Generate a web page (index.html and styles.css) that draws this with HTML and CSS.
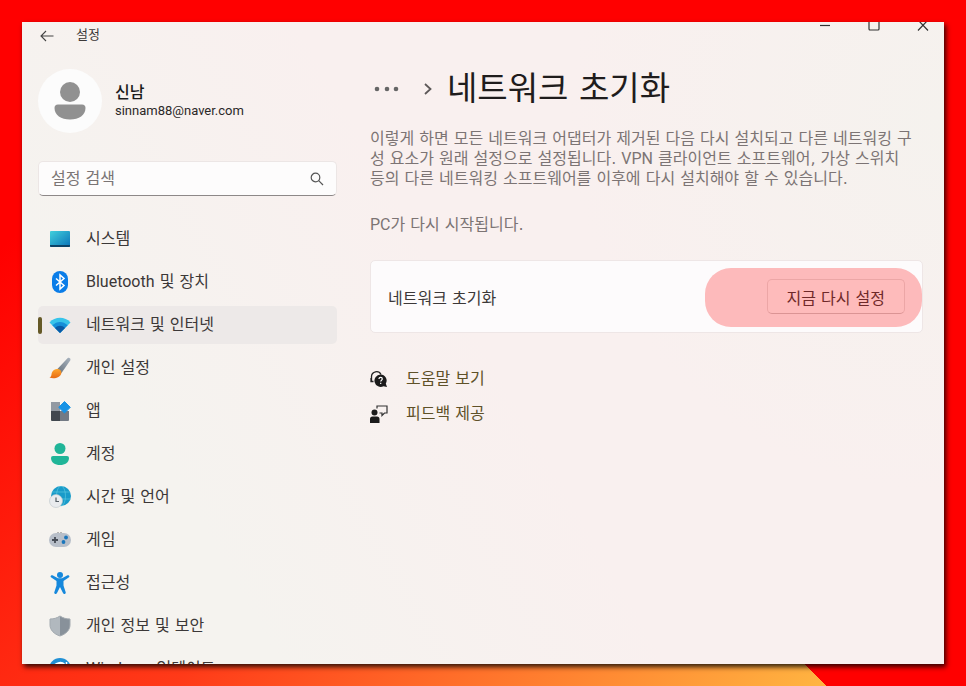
FILE: index.html
```html
<!DOCTYPE html>
<html lang="ko">

<head>
  <meta charset="UTF-8">
  <meta name="viewport" content="width=device-width, initial-scale=1.0">
  <title>설정</title>
  <link rel="stylesheet" href="styles.css">
</head>

<body>
  <div class="window">
    <header class="titlebar">
      <button class="back-btn" aria-label="뒤로">
        <svg width="14" height="12" viewBox="0 0 14 12" fill="none" stroke="#444" stroke-width="1.1">
          <path d="M13.5 6H1M6 1L1 6l5 5" />
        </svg>
      </button>
      <span class="app-name">설정</span>
      <div class="window-controls">
        <button aria-label="최소화">
          <svg width="12" height="12" viewBox="0 0 12 12"><path d="M1 3.5h10" stroke="#333" stroke-width="1.2" /></svg>
        </button>
        <button aria-label="최대화">
          <svg width="12" height="12" viewBox="0 0 12 12"><rect x="1" y="-2" width="10" height="10" rx="1" fill="none" stroke="#333" stroke-width="1.2" /></svg>
        </button>
        <button aria-label="닫기">
          <svg width="12" height="12" viewBox="0 0 12 12"><path d="M1-2l10 10.500M11-2L1 8.500" stroke="#333" stroke-width="1.2" /></svg>
        </button>
      </div>
    </header>

    <div class="content">
      <aside class="sidebar">
        <div class="profile">
          <div class="avatar">
            <svg width="32" height="38" viewBox="0 0 32 38" fill="#919191">
              <circle cx="16" cy="10" r="10" />
              <path d="M4 22.500h24a3.500 3.500 0 0 1 3.500 3.500c0 7-6.500 11.500-15.500 11.500S.5 33 .5 26A3.500 3.500 0 0 1 4 22.500z" />
            </svg>
          </div>
          <div>
            <div class="profile-name">신남</div>
            <div class="profile-mail">sinnam88@naver.com</div>
          </div>
        </div>

        <div class="search">
          <input type="text" placeholder="설정 검색" aria-label="설정 검색">
          <svg width="14" height="14" viewBox="0 0 14 14" fill="none" stroke="#555" stroke-width="1.2">
            <circle cx="5.500" cy="5.500" r="4.300" />
            <path d="M8.700 8.700L13 13" />
          </svg>
        </div>

        <nav class="nav">
          <a href="#">
            <svg viewBox="0 0 22 22">
              <defs>
                <linearGradient id="screen" x1="0" y1="0" x2="1" y2="1">
                  <stop offset="0" stop-color="#41d0dc" />
                  <stop offset="1" stop-color="#0a72b8" />
                </linearGradient>
              </defs>
              <rect x="1" y="3" width="20" height="16" rx="1" fill="url(#screen)" />
              <path d="M1 17h20v1a1 1 0 0 1-1 1H2a1 1 0 0 1-1-1z" fill="#0b4267" />
            </svg>
            시스템
          </a>
          <a href="#">
            <svg viewBox="0 0 22 22">
              <rect x="3" y="0" width="16" height="22" rx="8" fill="#0a7de8" />
              <path d="M7 7.500l8 7-4 3.500V4l4 3.500-8 7" fill="none" stroke="#fff" stroke-width="1.500" />
            </svg>
            <span><span lang="en">Bluetooth</span> 및 장치</span>
          </a>
          <a href="#" class="active">
            <svg viewBox="0 0 22 22">
              <path d="M.5 8.500C6 2.300 16 2.300 21.500 8.500L11 19z" fill="#38c4ea" />
              <path d="M3.300 11.300C8 6.800 14 6.800 18.700 11.300L11 19z" fill="#168fd8" />
              <path d="M6 14c3-3 7-3 10 0l-5 5z" fill="#0a5aa5" />
            </svg>
            네트워크 및 인터넷
          </a>
          <a href="#">
            <svg viewBox="0 0 22 22">
              <defs>
                <linearGradient id="handle" x1="0" y1="1" x2="1" y2="0">
                  <stop offset="0" stop-color="#66717c" />
                  <stop offset="1" stop-color="#a9b4bf" />
                </linearGradient>
                <linearGradient id="bristle" x1="0" y1="0" x2="0" y2="1">
                  <stop offset="0" stop-color="#ffa62d" />
                  <stop offset="1" stop-color="#e76a13" />
                </linearGradient>
              </defs>
              <path d="M8 12.500L18.500 1.300c1.500-1.300 3.700.3 2.700 2.100L12.500 16z" fill="url(#handle)" />
              <path d="M8 12c2.500-.5 5 2 4.300 4.500C11.300 20.500 5 22.500.5 20.500c2.800-1 1.300-3.500 3-6C4.500 13 6 12.200 8 12z" fill="url(#bristle)" />
            </svg>
            개인 설정
          </a>
          <a href="#">
            <svg viewBox="0 0 22 22">
              <path d="M2 2h9v9H2z" fill="#9299a2" />
              <path d="M2 11h9v10H3a1 1 0 0 1-1-1z" fill="#41474f" />
              <path d="M11 11h9v9a1 1 0 0 1-1 1h-8z" fill="#737a84" />
              <path d="M15.500 1.500L21.300 7.300l-5.800 5.800-5.800-5.800z" fill="#1792e5" stroke="#1792e5" stroke-linejoin="round" />
            </svg>
            앱
          </a>
          <a href="#">
            <svg viewBox="0 0 22 22" fill="#20b598">
              <circle cx="11" cy="5.500" r="5.500" />
              <path d="M4 13h14a2 2 0 0 1 2 2c0 4.500-4 7-9 7s-9-2.500-9-7a2 2 0 0 1 2-2z" />
            </svg>
            계정
          </a>
          <a href="#">
            <svg viewBox="0 0 22 22">
              <circle cx="12" cy="10" r="10" fill="#199bc9" />
              <g fill="none" stroke="#71d5e4" stroke-width=".5">
                <ellipse cx="12" cy="10" rx="4.500" ry="10" />
                <path d="M3 6h18M2.500 13h19" />
              </g>
              <circle cx="7" cy="15" r="6.500" fill="#e9ebee" stroke="#bcc5cb" stroke-width=".6" />
              <path d="M7 11.500v4h3" fill="none" stroke="#555d65" stroke-width="1.200" />
            </svg>
            시간 및 언어
          </a>
          <a href="#">
            <svg viewBox="0 0 22 22">
              <path d="M9 4V3M12 4V3" stroke="#777" />
              <rect x="0" y="4" width="22" height="14" rx="7" fill="#b8bfc9" />
              <path d="M3 11h6M6 8v6" stroke="#464c56" stroke-width="1.800" />
              <circle cx="17" cy="8.500" r="1.900" fill="#1976bc" />
              <circle cx="14.500" cy="13" r="1.900" fill="#1976bc" />
            </svg>
            게임
          </a>
          <a href="#">
            <svg viewBox="0 0 22 22" fill="#1688dc">
              <circle cx="11" cy="3" r="3" />
              <path d="M3.500 3.300c-1.600-.7-2.700 1.400-1.200 2.300L7.500 9v4.500l-2.200 6.700c-.5 1.900 2 2.600 2.700.9L11 15l3 6.100c.7 1.700 3.200 1 2.700-.9L14.500 13.500V9l5.200-3.400c1.500-.9.4-3-1.200-2.300L13 6.300H9z" />
            </svg>
            접근성
          </a>
          <a href="#">
            <svg viewBox="0 0 22 22">
              <path d="M11 1c3 2 6 3 10 3v6c0 5-4 9-10 11z" fill="#88919a" />
              <path d="M11 1C8 3 5 4 1 4v6c0 5 4 9 10 11z" fill="#b1b8be" />
              <path d="M11 1c3 2 6 3 10 3v6c0 5-4 9-10 11C5 19 1 15 1 10V4c4 0 7-1 10-3z" fill="none" stroke="#a3aab0" />
            </svg>
            개인 정보 및 보안
          </a>
          <a href="#">
            <svg viewBox="0 0 22 22">
              <circle cx="11" cy="11" r="11" fill="#2190d4" />
              <path d="M4.500 11a6.500 6.500 0 0 1 12-3M17.500 11a6.500 6.500 0 0 1-12 3" fill="none" stroke="#fff" stroke-width="2" />
              <path d="M17.500 4v5h-5M4.500 18v-5h5" fill="none" stroke="#fff" stroke-width="1.500" />
            </svg>
            <span><span lang="en">Windows</span> 업데이트</span>
          </a>
        </nav>
      </aside>

      <main class="main">
        <div class="breadcrumb">
          <button class="more-btn" aria-label="상위 메뉴">
            <svg width="26" height="6" viewBox="0 0 26 6" fill="#666">
              <circle cx="3" cy="3" r="2.300" />
              <circle cx="13" cy="3" r="2.300" />
              <circle cx="22" cy="3" r="2.300" />
            </svg>
          </button>
          <svg width="8" height="14" viewBox="0 0 8 14" fill="none" stroke="#5d5858" stroke-width="1.800">
            <path d="M1 2l5.500 5L1 12" />
          </svg>
          <h1>네트워크 초기화</h1>
        </div>

        <div class="description">
          <p>이렇게 하면 모든 네트워크 어댑터가 제거된 다음 다시 설치되고 다른 네트워킹 구<br>성 요소가 원래 설정으로 설정됩니다. <span lang="en">VPN</span> 클라이언트 소프트웨어, 가상 스위치<br>등의 다른 네트워킹 소프트웨어를 이후에 다시 설치해야 할 수 있습니다.</p>
          <p><span lang="en">PC</span>가 다시 시작됩니다.</p>
        </div>

        <section class="card">
          <span>네트워크 초기화</span>
          <button class="reset-btn">지금 다시 설정</button>
          <div class="highlight"></div>
        </section>

        <div class="links">
          <a href="#">
            <svg width="18" height="18" viewBox="0 0 18 18">
              <path d="M1.500 11V6.500a5 5 0 0 1 9.500-2M1 8v3.500h2.500" fill="none" stroke="#222" stroke-width="1.300" />
              <path d="M10.500 4.500a6 6 0 0 1 5.300 9l1.200 3.500-3.500-.8a6.200 6.200 0 1 1-3-11.700z" fill="#1b1b1b" />
              <path d="M9 9c0-2.200 3.300-2 3.300 0 0 1.200-1.600 1.300-1.600 2.600M10.700 12.800V14" fill="none" stroke="#fff" stroke-width="1.200" />
            </svg>
            도움말 보기
          </a>
          <a href="#">
            <svg width="18" height="18" viewBox="0 0 18 18">
              <circle cx="4.500" cy="7.500" r="3" fill="#1b1b1b" />
              <path d="M0 18v-4a2.500 2.500 0 0 1 2.500-2.500h4.500A2.500 2.500 0 0 1 9.500 14v4z" fill="#1b1b1b" />
              <path d="M7 3.500V1h10v7h-2.500L12 10.500V8H9.500" fill="none" stroke="#333" stroke-width="1.200" />
            </svg>
            피드백 제공
          </a>
        </div>
      </main>
    </div>
  </div>
</body>

</html>
```
FILE: styles.css
```css
:root {
  --text: #3c3838;
  --muted: #7c7474;
  --accent: #5f5128;
}

* {
  margin: 0;
  padding: 0;
  box-sizing: border-box;
}

body {
  height: 100vh;
  padding: 22px;
  overflow: hidden;
  font-family: 'DejaVu Sans', 'Noto Sans CJK KR', sans-serif;
  font-size: 16px;
  color: var(--text);
  background:
    linear-gradient(45deg, transparent 50%, #ff0000 50%),
    linear-gradient(135deg, #ff0000 15%, #ff3a18 52%, #ffb441 91%);
}

[lang="en"] {
  font-family: Roboto, sans-serif;
  line-height: 1;
}

button {
  border: none;
  background: none;
  font: inherit;
  color: inherit;
  cursor: pointer;
}

a {
  color: inherit;
  text-decoration: none;
}

.window {
  height: 100%;
  overflow: hidden;
  background:
    radial-gradient(circle at 100% 15%, #f5f2ee, transparent 35%),
    linear-gradient(60deg, #f5f3ef 20%, #f9f0ef 50%);
  box-shadow: 2px 3px 5px rgba(0, 0, 0, 0.8);
}

.titlebar {
  display: flex;
  align-items: flex-start;
  height: 47px;
  padding: 0 15px 0 18px;
}

.back-btn {
  display: flex;
  align-items: center;
  height: 27px;
}

.app-name {
  flex: 1;
  padding-left: 22px;
  font-size: 13px;
  line-height: 26px;
}

.window-controls {
  display: flex;
  gap: 37px;
}

.window-controls svg {
  display: block;
}

.content {
  display: flex;
  gap: 33px;
  padding: 0 21px 0 16px;
}

.sidebar {
  flex: 0 0 299px;
}

.profile {
  display: flex;
  align-items: center;
  gap: 13px;
  margin-bottom: 28px;
}

.avatar {
  display: flex;
  align-items: center;
  justify-content: center;
  width: 64px;
  height: 64px;
  border-radius: 50%;
  background: #fcfcfc;
}

.profile-name {
  font-size: 16px;
  font-weight: 500;
  line-height: 20px;
  color: #1b1b1b;
}

.profile-mail {
  font-family: Roboto, sans-serif;
  font-size: 13px;
  line-height: 16px;
  color: #2b2828;
}

.search {
  display: flex;
  align-items: center;
  height: 35px;
  margin-bottom: 24px;
  padding: 0 12px;
  border: 1px solid #ece6e5;
  border-bottom-color: #8d8888;
  border-radius: 5px;
  background: #fdfcfc;
}

.search input {
  flex: 1;
  min-width: 0;
  border: none;
  outline: none;
  background: none;
  font: inherit;
}

.search input::placeholder {
  color: #7a7474;
}

.nav {
  display: flex;
  flex-direction: column;
  gap: 5px;
}

.nav a {
  display: flex;
  align-items: center;
  gap: 15px;
  height: 38px;
  padding-left: 11px;
  border-radius: 5px;
  line-height: 20px;
  white-space: nowrap;
}

.nav svg {
  width: 22px;
  height: 22px;
}

.nav .active {
  padding-left: 0;
  background: #ede9e8;
}

/* selection pill */
.nav .active::before {
  content: '';
  width: 4px;
  height: 17px;
  margin-right: -8px;
  border-radius: 2px;
  background: #655927;
}

.main {
  flex: 1;
  min-width: 0;
}

.breadcrumb {
  display: flex;
  align-items: center;
  height: 40px;
  padding-left: 4px;
}

.more-btn {
  display: flex;
  margin-right: 24px;
}

.breadcrumb h1 {
  margin-left: 15px;
  font-size: 33px;
  font-weight: 400;
  line-height: 40px;
  color: #1f1c1c;
}

.description {
  margin-top: 20px;
  line-height: 20px;
  color: var(--muted);
  white-space: nowrap;
}

.description p + p {
  margin-top: 26px;
}

.card {
  position: relative;
  display: flex;
  align-items: center;
  justify-content: space-between;
  height: 73px;
  margin-top: 25px;
  padding: 0 17px;
  border: 1px solid #eee6e6;
  border-radius: 5px;
  background: #fdfbfc;
}

.reset-btn {
  height: 35px;
  padding: 0 19px;
  border: 1px solid #e6e0e0;
  border-bottom-color: #cfc8c8;
  border-radius: 5px;
  background: #fefcfc;
}

.highlight {
  position: absolute;
  top: 7px;
  right: 0;
  width: 217px;
  height: 59px;
  border-radius: 26px;
  background: rgba(255, 0, 0, 0.26);
  pointer-events: none;
}

.links {
  display: flex;
  flex-direction: column;
  gap: 11px;
  margin-top: 34px;
  color: var(--accent);
}

.links a {
  display: flex;
  align-items: center;
  gap: 18px;
  line-height: 24px;
}
```
